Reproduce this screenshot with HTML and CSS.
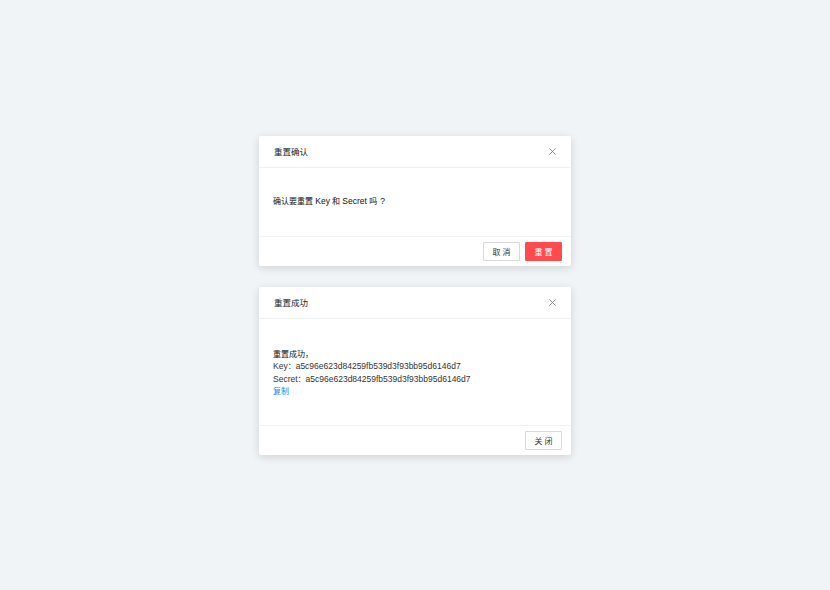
FILE: index.html
```html
<!DOCTYPE html>
<html lang="zh">
<head>
<meta charset="utf-8">
<link rel="stylesheet" href="styles.css">
</head>
<body>
<div class="stack">
  <div class="dialog">
    <div class="header">
      <span class="title">重置确认</span>
      <svg class="close" viewBox="0 0 10 10" width="7" height="7"><path d="M0.5 0.5L9.5 9.5M9.5 0.5L0.5 9.5" stroke="#777" stroke-width="1.2" fill="none"/></svg>
    </div>
    <div class="body body-confirm">确认要重置 <span class="en">Key</span> 和 <span class="en">Secret</span> 吗<span class="en q">?</span></div>
    <div class="footer">
      <button class="btn">取 消</button>
      <button class="btn btn-danger">重 置</button>
    </div>
  </div>
  <div class="dialog">
    <div class="header">
      <span class="title">重置成功</span>
      <svg class="close" viewBox="0 0 10 10" width="7" height="7"><path d="M0.5 0.5L9.5 9.5M9.5 0.5L0.5 9.5" stroke="#777" stroke-width="1.2" fill="none"/></svg>
    </div>
    <div class="body body-result">
      <div class="strong">重置成功，</div>
      <div><span class="en">Key</span>：<span class="en">a5c96e623d84259fb539d3f93bb95d6146d7</span></div>
      <div><span class="en">Secret</span>：<span class="en">a5c96e623d84259fb539d3f93bb95d6146d7</span></div>
      <div class="link">复制</div>
    </div>
    <div class="footer">
      <button class="btn">关 闭</button>
    </div>
  </div>
</div>
</body>
</html>
```
FILE: styles.css
```css
html, body {
  margin: 0;
  height: 100%;
}
body {
  background: #f1f4f7;
  font-family: "Liberation Sans", "Noto Sans CJK SC", sans-serif;
  font-size: 8px;
  color: #222;
  display: flex;
  align-items: center;
  justify-content: center;
}
.stack {
  display: flex;
  flex-direction: column;
  gap: 21px;
}
.dialog {
  width: 312px;
  background: #fff;
  border-radius: 2px;
  box-shadow: 0 2px 8px rgba(0, 0, 0, 0.14);
}
.header {
  height: 32px;
  border-bottom: 1px solid #eef0f3;
  display: flex;
  align-items: center;
  justify-content: space-between;
  padding: 0 15px 0 15px;
  box-sizing: border-box;
}
.title {
  font-size: 8.5px;
  color: #222;
}
.close {
  display: block;
}
.en {
  font-size: 8.5px;
  line-height: 1;
}
.q {
  margin-left: 3px;
}
.body {
  padding: 0 14px;
}
.body-confirm {
  padding-top: 27px;
  padding-bottom: 28px;
  line-height: 13px;
  color: #111;
}
.body-result {
  padding-top: 30px;
  padding-bottom: 26px;
  line-height: 12.5px;
  color: #333;
}
.strong {
  color: #111;
}
.link {
  color: #1e88e5;
}
.footer {
  height: 30px;
  border-top: 1px solid #f0f2f5;
  display: flex;
  align-items: center;
  justify-content: flex-end;
  gap: 5px;
  padding-right: 9px;
  box-sizing: border-box;
}
.btn {
  width: 37px;
  height: 19px;
  border: 1px solid #d9d9d9;
  background: #fff;
  border-radius: 1px;
  font-family: inherit;
  font-size: 8px;
  color: #333;
  padding: 0;
  cursor: pointer;
}
.btn-danger {
  background: #ff4a4f;
  border-color: #ff4a4f;
  color: #fff;
}
```
